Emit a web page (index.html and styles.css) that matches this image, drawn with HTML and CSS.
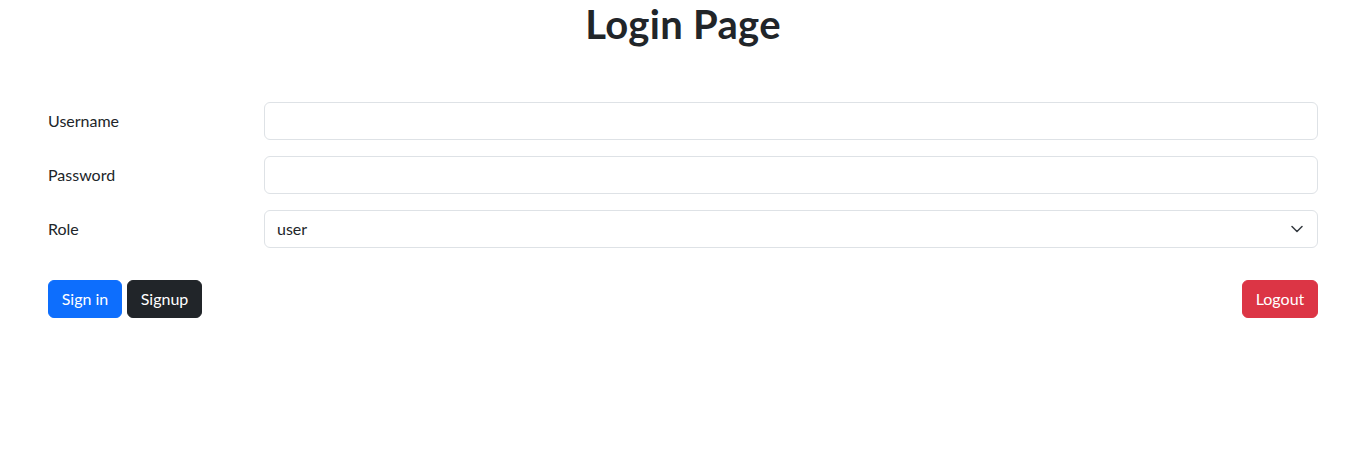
FILE: index.html
```html
<!DOCTYPE html>
<html lang="en">
<head>
<meta charset="utf-8">
<title>Login Page</title>
<link rel="stylesheet" href="styles.css">
</head>
<body>
<div class="container">
  <h1 class="title">Login Page</h1>
  <form class="login-form">
    <div class="form-row">
      <label class="form-label" for="username">Username</label>
      <div class="field"><input class="form-control" id="username" type="text"></div>
    </div>
    <div class="form-row">
      <label class="form-label" for="password">Password</label>
      <div class="field"><input class="form-control" id="password" type="password"></div>
    </div>
    <div class="form-row">
      <label class="form-label" for="role">Role</label>
      <div class="field select-wrap">
        <select class="form-control form-select" id="role">
          <option>user</option>
          <option>admin</option>
        </select>
        <svg class="chevron" width="12" height="8" viewBox="0 0 12 8" aria-hidden="true"><path d="M1 1.5 6 6.5 11 1.5" fill="none" stroke="#343a40" stroke-width="1.5" stroke-linecap="round" stroke-linejoin="round"/></svg>
      </div>
    </div>
    <div class="actions">
      <div class="left-actions">
        <button type="button" class="btn btn-primary">Sign in</button>
        <button type="button" class="btn btn-dark">Signup</button>
      </div>
      <button type="button" class="btn btn-danger">Logout</button>
    </div>
  </form>
</div>
</body>
</html>
```
FILE: styles.css
```css
* { box-sizing: border-box; }
body {
  margin: 0;
  font-family: "Lato", "Noto Sans", "Liberation Sans", sans-serif;
  font-size: 16px;
  line-height: 1.5;
  color: #212529;
  background: #fff;
}
.container {
  padding: 0 48px;
}
.title {
  margin: 0;
  font-size: 40px;
  font-weight: 700;
  line-height: 1.2;
  text-align: center;
  letter-spacing: 0.3px;
}
.login-form {
  margin-top: 54px;
}
.form-row {
  display: grid;
  grid-template-columns: 192px 1fr;
  column-gap: 24px;
  margin-bottom: 16px;
}
.form-label {
  padding: 7px 0;
  line-height: 1.5;
}
.field { position: relative; }
.form-control {
  display: block;
  width: 100%;
  height: 38px;
  padding: 6px 12px;
  font: inherit;
  color: #212529;
  background: #fff;
  border: 1px solid #dee2e6;
  border-radius: 6px;
  appearance: none;
  -webkit-appearance: none;
  outline: none;
}
.form-select { padding-right: 36px; }
.chevron {
  position: absolute;
  right: 15px;
  top: 15px;
  pointer-events: none;
}
.actions {
  display: flex;
  justify-content: space-between;
  align-items: center;
  margin-top: 32px;
}
.left-actions {
  display: flex;
  gap: 5px;
}
.btn {
  height: 38px;
  padding: 6px 12px;
  font: inherit;
  line-height: 1.5;
  border: 1px solid transparent;
  border-radius: 6px;
  color: #fff;
  cursor: pointer;
}
.btn-primary { background: #0d6efd; border-color: #0d6efd; min-width: 74px; }
.btn-dark { background: #212529; border-color: #212529; min-width: 75px; }
.btn-danger { background: #dc3545; border-color: #dc3545; min-width: 76px; }
```
